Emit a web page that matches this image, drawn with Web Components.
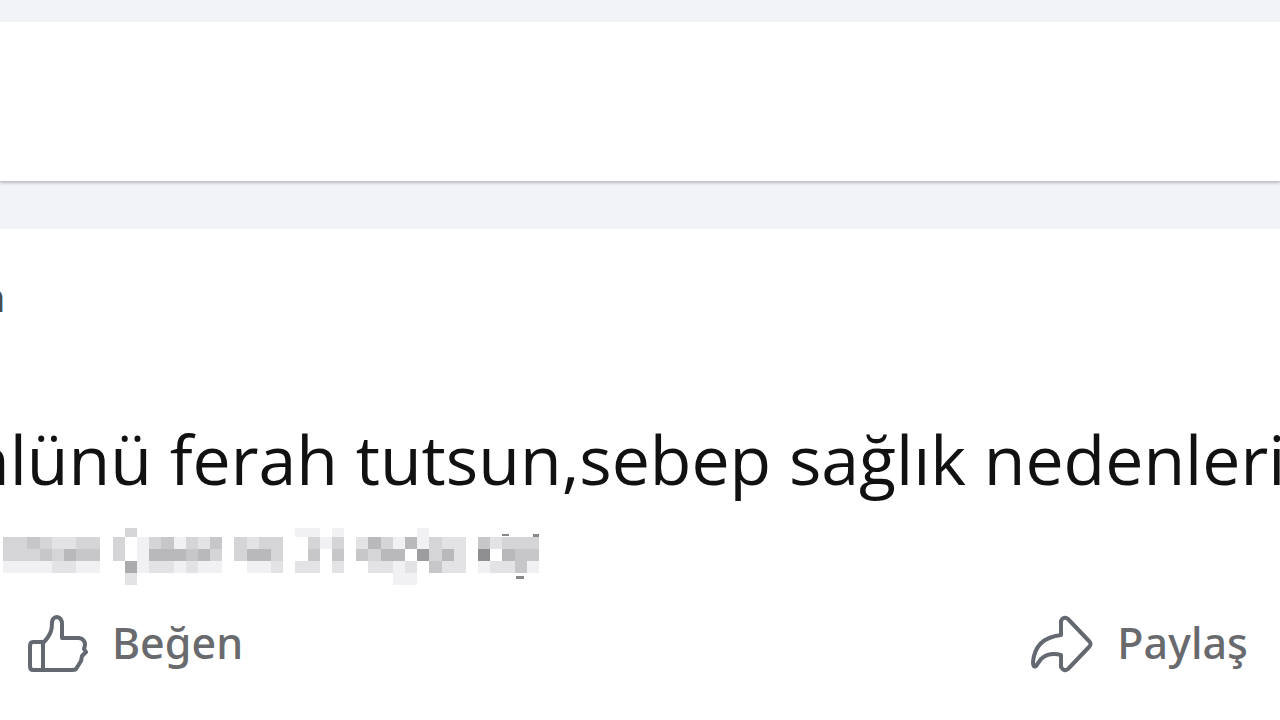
<!DOCTYPE html>
<html lang="tr">
<head>
<meta charset="utf-8">
<title>Gönderi</title>
<style>
body { margin: 0; background: #f2f3f7; font-family: "Open Sans", "Noto Sans", sans-serif; overflow: hidden; }
</style>
</head>
<body>
<feed-page></feed-page>
<script>
class BaseElement extends HTMLElement {
  constructor() {
    super();
    this.attachShadow({ mode: "open" }).innerHTML = this.constructor.markup;
  }
}

customElements.define("feed-card", class extends BaseElement {
  static markup = `
    <style>
      :host { display: block; background: #fff; box-shadow: 0 2px 3px 0 #b8babd; clip-path: inset(0 0 -8px 0); }
    </style>
    <slot></slot>`;
});

/* Names of the people who reacted, hidden behind a mosaic. */
customElements.define("masked-names", class extends BaseElement {
  static markup = `
    <style>
      :host { display: block; }
      svg { display: block; width: 536px; height: 60px; overflow: visible; }
    </style>
    <svg viewBox="0 0 528 60" preserveAspectRatio="none" shape-rendering="crispEdges" aria-hidden="true"></svg>`;
  connectedCallback() {
    const rows = [
      "00000000003000000000000011010000001000000000",
      "33432233030134132403233003130253151322042333",
      "33343544030155545303553004040435507352080544",
      "11112211006122121100112022020022120422012241",
      "00000000002000000000000000000000110000000000"
    ];
    let cells = "";
    rows.forEach((row, y) => [...row].forEach((level, x) => {
      if (level === "0") return;
      const v = 255 - level * 14;
      const top = y ? y * 12 : 3;
      cells += `<rect x="${x * 12}" y="${top}" width="12" height="${y ? 12 : 9}" fill="rgb(${v},${v},${v + 2})"/>`;
    }));
    cells += '<g fill="#888"><rect x="522" y="9" width="6" height="3"/><rect x="492" y="9" width="6" height="2"/><rect x="505" y="51" width="8" height="3"/></g>';
    this.shadowRoot.querySelector("svg").innerHTML = cells;
  }
});

customElements.define("post-action", class extends BaseElement {
  static markup = `
    <style>
      :host { display: block; }
      button { display: flex; align-items: center; gap: 24px; padding: 0; border: 0; background: none;
        color: #696a6e; font: 500 43px/64px "Noto Sans", "Open Sans", sans-serif; }
      ::slotted(svg) { display: block; width: 64px; height: 64px; fill: none; stroke: #636871; stroke-width: 4; stroke-linejoin: round; stroke-linecap: round; }
    </style>
    <button type="button"><slot name="icon"></slot><slot></slot></button>`;
});

customElements.define("feed-page", class extends BaseElement {
  static markup = `
    <style>
      :host { display: flex; flex-direction: column; gap: 48px; padding-top: 22px; }
      .composer { height: 159px; }
      .post { height: 520px; }
      .meta { margin: 0 0 0 -20px; padding-top: 36px; font-size: 40px; line-height: 64px; font-weight: 600; color: #4b4c4f; }
      .message { margin: 0 0 0 -32px; padding-top: 82px; font: 400 68px/96px "Open Sans", sans-serif; color: #111; white-space: nowrap; }
      masked-names { padding: 18px 0 0 3px; }
      .actions { display: flex; justify-content: space-between; padding: 26px 32px 0 24px; }
    </style>
    <feed-card class="composer"></feed-card>
    <feed-card class="post">
      <p class="meta">n</p>
      <p class="message">nlünü ferah tutsun,sebep sağlık nedenleri</p>
      <masked-names></masked-names>
      <div class="actions">
        <post-action>
          <svg slot="icon" viewBox="0 -4 64 64" aria-hidden="true"><path d="M9 27H19V55H9Q6 55 6 51V31Q6 27 9 27ZM19 28Q25 22 27 16Q28 13 28 7Q29 2 33 2Q38 3 38 9V23H55Q61 24 61 30L60 34L62 37L58 41L57 46L52 54Q51 55 48 55H19"/></svg>
          Beğen
        </post-action>
        <post-action>
          <svg slot="icon" viewBox="0 -4 64 64" aria-hidden="true"><path d="M32 6Q34 1 39 4L60 26Q63 29 60 32L39 54Q35 57 32 52V40Q20 37 12 44L7 51Q4 53 4 47Q6 23 32 20Z"/></svg>
          Paylaş
        </post-action>
      </div>
    </feed-card>`;
});
</script>
</body>
</html>
